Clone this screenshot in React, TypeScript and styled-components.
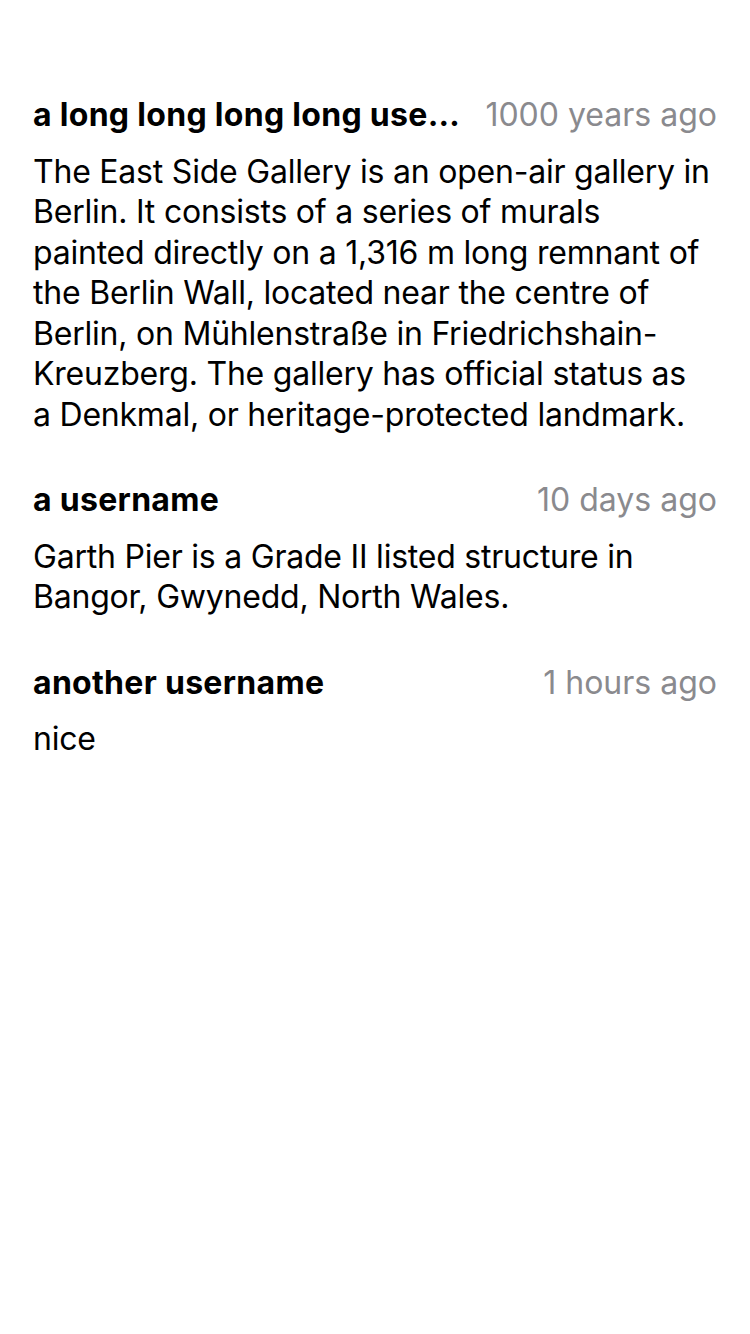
import React from "react";
import styled, { createGlobalStyle } from "styled-components";

const GlobalStyle = createGlobalStyle`
  html, body {
    margin: 0;
    padding: 0;
    background: #ffffff;
  }
  body {
    font-family: Inter, "Noto Sans", "Liberation Sans", sans-serif;
    -webkit-font-smoothing: antialiased;
  }
`;

const Page = styled.div`
  width: 750px;
  min-height: 1334px;
  box-sizing: border-box;
  padding: 95px 33px 0 33px;
  display: flex;
  flex-direction: column;
  gap: 45px;
`;

const Comment = styled.div`
  display: flex;
  flex-direction: column;
  gap: 16px;
`;

const Header = styled.div`
  display: flex;
  align-items: center;
  justify-content: space-between;
  gap: 20px;
  font-size: 32px;
  line-height: 40.5px;
`;

const Username = styled.div`
  flex: 1 1 auto;
  min-width: 0;
  font-weight: 700;
  letter-spacing: 0.3px;
  color: #000000;
  white-space: nowrap;
  overflow: hidden;
  text-overflow: ellipsis;
`;

const Time = styled.div`
  flex: 0 0 auto;
  color: #8a8a8e;
  font-weight: 400;
  letter-spacing: 0;
  white-space: nowrap;
`;

const Body = styled.div`
  padding-right: 6px;
  font-size: 32px;
  line-height: 40.5px;
  letter-spacing: -0.22px;
  color: #000000;
`;

const comments = [
  {
    user: "a long long long long username",
    time: "1000 years ago",
    text: "The East Side Gallery is an open-air gallery in Berlin. It consists of a series of murals painted directly on a 1,316 m long remnant of the Berlin Wall, located near the centre of Berlin, on Mühlenstraße in Friedrichshain-Kreuzberg. The gallery has official status as a Denkmal, or heritage-protected landmark.",
  },
  {
    user: "a username",
    time: "10 days ago",
    text: "Garth Pier is a Grade II listed structure in Bangor, Gwynedd, North Wales.",
  },
  {
    user: "another username",
    time: "1 hours ago",
    text: "nice",
  },
];

export default function App() {
  return (
    <>
      <GlobalStyle />
      <Page>
        {comments.map((c) => (
          <Comment key={c.user}>
            <Header>
              <Username>{c.user}</Username>
              <Time>{c.time}</Time>
            </Header>
            <Body>{c.text}</Body>
          </Comment>
        ))}
      </Page>
    </>
  );
}
